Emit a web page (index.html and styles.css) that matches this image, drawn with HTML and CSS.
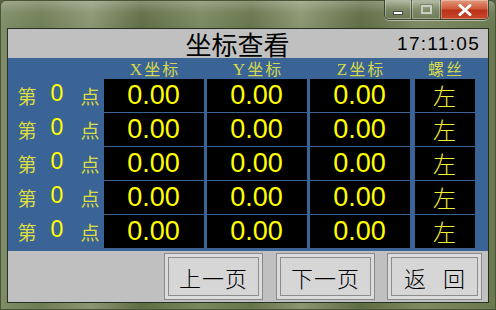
FILE: index.html
```html
<!DOCTYPE html>
<html lang="zh-CN">
<head>
    <meta charset="UTF-8">
    <meta name="viewport" content="width=device-width, initial-scale=1.0">
    <title>坐标查看</title>
    <link rel="stylesheet" href="styles.css">
</head>
<body>
    <div class="window">
        <div class="titlebar">
            <div class="controls">
                <div class="ctl ctl-min"><span class="min-bar"></span></div>
                <div class="ctl ctl-max"><span class="max-box"></span></div>
                <div class="ctl ctl-close">
                    <svg width="16" height="12" viewBox="0 0 16 12">
                        <path d="M3 1.5 L13 10.5 M13 1.5 L3 10.5" stroke="#fff" stroke-width="3" stroke-linecap="round"/>
                    </svg>
                </div>
            </div>
        </div>

        <div class="client">
            <div class="header">
                <div class="title">坐标查看</div>
                <div class="clock" id="clock">17:11:05</div>
            </div>

            <div class="panel">
                <div class="grid" id="grid">
                    <div class="col-label"></div>
                    <div class="col-label"><span class="latin">X</span>坐标</div>
                    <div class="col-label"><span class="latin">Y</span>坐标</div>
                    <div class="col-label"><span class="latin">Z</span>坐标</div>
                    <div class="col-label wide">螺丝</div>
                </div>
            </div>

            <div class="footer">
                <button class="btn">上一页</button>
                <button class="btn">下一页</button>
                <button class="btn btn-back">返&nbsp;回</button>
            </div>
        </div>
    </div>

    <script>
        // five point rows, all zeroed
        const grid = document.getElementById('grid');
        const rows = [0, 0, 0, 0, 0];

        rows.forEach(n => {
            grid.insertAdjacentHTML('beforeend', `
                <div class="point"><span>第</span><span class="num">${n}</span><span>点</span></div>
                <div class="cell">0.00</div>
                <div class="cell">0.00</div>
                <div class="cell">0.00</div>
                <div class="cell dir">左</div>
            `);
        });
    </script>
</body>
</html>
```

FILE: styles.css
```css
* {
    margin: 0;
    padding: 0;
    box-sizing: border-box;
}

body {
    width: 496px;
    height: 310px;
    overflow: hidden;
    background: #56623f;
    font-family: "Noto Sans CJK SC", sans-serif;
}

.window {
    width: 496px;
    height: 310px;
    border-radius: 6px 6px 0 0;
    border: 1px solid #4a5535;
    background:
        linear-gradient(180deg, rgba(255,255,255,0.25) 0, rgba(255,255,255,0.05) 12px, rgba(0,0,0,0) 28px),
        linear-gradient(90deg, #7f8d68 0, #6f7d55 40px, #8a9672 90px, #5f6d45 140px, #7a8860 200px, #66744b 250px, #8a9670 300px, #5e6c44 360px, #7d8a62 420px, #6a7850 496px);
    padding: 0 6px 0;
}

.titlebar {
    height: 27px;
    display: flex;
    justify-content: flex-end;
}

.controls {
    display: flex;
    height: 20px;
    margin-top: -1px;
    border: 1px solid #3c4630;
    border-top: none;
    border-radius: 0 0 5px 5px;
    overflow: hidden;
    box-shadow: 0 1px 0 rgba(255,255,255,0.45);
}

.ctl {
    display: flex;
    align-items: center;
    justify-content: center;
    height: 100%;
    background: linear-gradient(180deg, rgba(200,210,190,0.55), rgba(120,135,100,0.55) 50%, rgba(100,115,80,0.6));
    border-right: 1px solid rgba(40,50,30,0.6);
    box-shadow: inset 0 0 0 1px rgba(255,255,255,0.3);
}

.ctl-min { width: 27px; }
.ctl-max { width: 29px; }

.ctl-close {
    width: 47px;
    border-right: none;
    background: linear-gradient(180deg, #e29a80 0, #cf5a3a 45%, #b8321a 55%, #c8482c 100%);
}

.min-bar {
    width: 10px;
    height: 4px;
    margin-top: 6px;
    background: #fff;
    border: 1px solid #4a4a4a;
}

.max-box {
    width: 11px;
    height: 9px;
    border: 2px solid #c8cfbf;
    outline: 1px solid #7c8770;
}

.client {
    width: 482px;
    height: 275px;
    border: 1px solid #2a2f24;
    background: #c0c0c0;
    display: flex;
    flex-direction: column;
}

.header {
    height: 29px;
    display: grid;
    grid-template-columns: 1fr auto;
    align-items: center;
    padding-right: 8px;
}

.title {
    text-align: center;
    padding-left: 70px;
    font-size: 26px;
    line-height: 29px;
    color: #000;
}

.clock {
    font-family: "Liberation Sans", sans-serif;
    font-size: 19px;
    letter-spacing: 1.3px;
    color: #000;
    padding-top: 1px;
}

.panel {
    height: 193px;
    background: #3a6396;
    padding-bottom: 3px;
}

.grid {
    display: grid;
    grid-template-columns: 93px 100px 100px 100px 62px;
    grid-template-rows: 20px repeat(5, 33px);
    column-gap: 3px;
    row-gap: 1px;
}

.col-label {
    text-align: center;
    font-size: 16px;
    line-height: 20px;
    color: #d6d84a;
    letter-spacing: 2px;
    padding-left: 2px;
}

.col-label.wide {
    padding-left: 4px;
}

.latin {
    font-family: "Liberation Serif", serif;
    font-size: 17px;
}

.point {
    display: flex;
    align-items: center;
    font-size: 19px;
    color: #dede40;
    padding-left: 9px;
}

.point span {
    width: 20px;
    text-align: center;
}

.point .num {
    font-family: "Liberation Sans", sans-serif;
    font-size: 23px;
    color: #ffff00;
    margin: -4px 13px 0 10px;
}

.cell {
    background: #000;
    color: #ffff00;
    font-family: "Liberation Sans", sans-serif;
    font-size: 27px;
    line-height: 33px;
    text-align: center;
    padding-right: 1px;
}

.cell.dir {
    font-family: "Noto Sans CJK SC", sans-serif;
    font-size: 23px;
    font-weight: 300;
    margin-left: 2px;
    color: #f2f230;
}

.footer {
    flex: 1;
    display: flex;
    justify-content: flex-end;
    align-items: flex-start;
    gap: 13px;
    padding: 2px 6px 0 0;
}

.btn {
    width: 99px;
    height: 47px;
    border: 1px solid #8a8a8a;
    background: #d6d6d6;
    box-shadow: inset 0 0 0 3px #dcdcdc, inset 0 0 0 4px #8c8c8c;
    font-family: "Noto Sans CJK SC", sans-serif;
    font-size: 22px;
    font-weight: 300;
    color: #000;
    letter-spacing: 1px;
}

.btn-back {
    width: 95px;
    margin-left: -1px;
    letter-spacing: 6px;
    padding-left: 6px;
}
```
